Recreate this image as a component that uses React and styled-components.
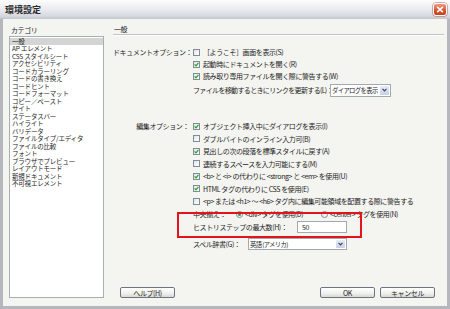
import React from 'react';
import styled, { createGlobalStyle } from 'styled-components';

const Global = createGlobalStyle`
  html, body { margin: 0; padding: 0; background: #f3f3f0; }
  body { font-family: "Noto Sans CJK JP", "Noto Sans", sans-serif; }
`;

const Window = styled.div`
  position: relative;
  width: 450px;
  height: 309px;
  display: flex;
  flex-direction: column;
  background: #f4f4f1;
  color: #1e1e1e;
  font-size: 7px;
  letter-spacing: -0.4px;
  overflow: hidden;
`;

const TitleBar = styled.div`
  height: 19px;
  flex: none;
  display: flex;
  align-items: center;
  justify-content: space-between;
  padding: 0 3px 0 5px;
  box-sizing: border-box;
  background: linear-gradient(#fdfdfd 0%, #ececf1 45%, #d7d7df 85%, #c4c4cd 100%);
`;

const Title = styled.div`
  font-size: 9px;
  font-weight: bold;
  letter-spacing: 0;
  color: #2a2a2a;
`;

const CloseButton = styled.div`
  width: 14px;
  height: 13px;
  box-sizing: border-box;
  border: 1px solid #fff;
  border-radius: 3px;
  background: linear-gradient(#ee9a80, #d4532f 60%, #c8401f);
  display: flex;
  align-items: center;
  justify-content: center;
  box-shadow: 0 0 0 0.5px #b06050;
`;

const Frame = styled.div`
  flex: 1;
  display: flex;
  box-sizing: border-box;
  padding: 6px 3px 8px 6px;
  border-left: 3px solid #b6b6be;
  border-right: 3px solid #b6b6be;
  border-bottom: 3px solid #b6b6be;
`;

const Sidebar = styled.div`
  width: 95px;
  flex: none;
  display: flex;
  flex-direction: column;
`;

const SideLabel = styled.div`
  height: 11px;
  line-height: 10px;
  padding-left: 2px;
`;

const List = styled.div`
  height: 262px;
  box-sizing: border-box;
  border: 1px solid #a9aeb5;
  background: #fff;
  padding-top: 0.5px;
`;

const ListItem = styled.div`
  height: 7.5px;
  line-height: 7.5px;
  font-size: 6.5px;
  letter-spacing: -0.2px;
  padding-left: 2px;
  white-space: nowrap;
  background: ${(p) => (p.$selected ? '#d4d4d4' : 'transparent')};
`;

const Main = styled.div`
  flex: 1;
  margin-left: 9px;
  display: flex;
  flex-direction: column;
`;

const Header = styled.div`
  height: 9px;
  line-height: 9px;
  padding-left: 1px;
`;

const Separator = styled.div`
  height: 0;
  border-top: 1px solid #c2c2c2;
  border-bottom: 1px solid #ffffff;
`;

const Section = styled.div`
  display: flex;
  margin-top: ${(p) => p.$top}px;
`;

const SectionLabel = styled.div`
  width: 80px;
  flex: none;
  box-sizing: border-box;
  text-align: right;
  padding-right: 4px;
  line-height: ${(p) => p.$h}px;
  white-space: nowrap;
`;

const Options = styled.div`
  display: flex;
  flex-direction: column;
`;

const Row = styled.div`
  height: ${(p) => p.$h}px;
  margin-top: ${(p) => p.$top || 0}px;
  display: flex;
  align-items: center;
  white-space: nowrap;
`;

const Box = styled.span`
  width: 7px;
  height: 7px;
  flex: none;
  box-sizing: border-box;
  border: 1px solid #7f8c9b;
  background: linear-gradient(135deg, #e4e4e0, #ffffff);
  margin-right: 3px;
  display: flex;
  align-items: center;
  justify-content: center;
`;

const Radio = styled.span`
  width: 7px;
  height: 7px;
  flex: none;
  box-sizing: border-box;
  border: 1px solid #7f8c9b;
  border-radius: 50%;
  background: linear-gradient(135deg, #e4e4e0, #ffffff);
  margin-right: 2px;
  display: flex;
  align-items: center;
  justify-content: center;
  &::after {
    content: '';
    display: ${(p) => (p.$checked ? 'block' : 'none')};
    width: 3px;
    height: 3px;
    border-radius: 50%;
    background: #2aa52a;
  }
`;

const Bottom = styled.div`
  padding-left: 80px;
  display: flex;
  flex-direction: column;
`;

const FixedLabel = styled.span`
  width: ${(p) => p.$w}px;
  flex: none;
  white-space: nowrap;
  letter-spacing: ${(p) => (p.$tight ? '-0.65px' : 'inherit')};
`;

const Select = styled.div`
  width: ${(p) => p.$w}px;
  height: ${(p) => p.$h}px;
  box-sizing: border-box;
  border: 1px solid #a3a9b1;
  background: #fff;
  display: flex;
  align-items: center;
`;

const SelectText = styled.span`
  flex: 1;
  min-width: 0;
  padding-left: 1px;
  font-size: 6.3px;
  letter-spacing: -0.6px;
  white-space: nowrap;
`;

const Arrow = styled.span`
  width: 9px;
  flex: none;
  align-self: stretch;
  margin: 1px;
  background: linear-gradient(#e6ecf8, #c6d0e6);
  border-radius: 1px;
  display: flex;
  align-items: center;
  justify-content: center;
`;

const Input = styled.div`
  width: 50px;
  height: 12px;
  box-sizing: border-box;
  border: 1px solid #a3a9b1;
  background: #fff;
  padding-left: 4px;
  line-height: 10px;
`;

const ButtonRow = styled.div`
  margin-top: auto;
  display: flex;
  align-items: center;
  padding: 0 9px 0 7px;
`;

const Button = styled.div`
  width: 55px;
  height: 11px;
  box-sizing: border-box;
  border: 1px solid #6a7685;
  border-radius: 2px;
  background: linear-gradient(#ffffff, #f0f0ec 60%, #d8d8d2);
  display: flex;
  align-items: center;
  justify-content: center;
  margin-left: ${(p) => p.$ml || 0}px;
`;

const Spacer = styled.div`
  flex: 1;
`;

const Highlight = styled.div`
  position: absolute;
  left: 177px;
  top: 212px;
  width: 185px;
  height: 26px;
  box-sizing: border-box;
  border: 2px solid #e3141b;
  pointer-events: none;
`;

const Check = ({ checked }) => (
  <Box>
    {checked && (
      <svg width="5" height="5" viewBox="0 0 5 5">
        <path d="M0.6 2.4 L2 3.8 L4.4 0.9" fill="none" stroke="#1f9e1f" strokeWidth="1.2" />
      </svg>
    )}
  </Box>
);

const Chevron = () => (
  <svg width="5" height="4" viewBox="0 0 5 4">
    <path d="M0.5 0.8 L2.5 2.8 L4.5 0.8" fill="none" stroke="#3b4350" strokeWidth="1.2" />
  </svg>
);

const categories = [
  '一般',
  'AP エレメント',
  'CSS スタイルシート',
  'アクセシビリティ',
  'コードカラーリング',
  'コードの書き換え',
  'コードヒント',
  'コードフォーマット',
  'コピー／ペースト',
  'サイト',
  'ステータスバー',
  'ハイライト',
  'バリデータ',
  'ファイルタイプ/エディタ',
  'ファイルの比較',
  'フォント',
  'ブラウザでプレビュー',
  'レイアウトモード',
  '新規ドキュメント',
  '不可視エレメント',
];

const docOptions = [
  { label: '［ようこそ］画面を表示(S)', checked: false },
  { label: '起動時にドキュメントを開く(R)', checked: true },
  { label: '読み取り専用ファイルを開く際に警告する(W)', checked: true },
];

const editOptions = [
  { label: 'オブジェクト挿入中にダイアログを表示(I)', checked: true },
  { label: 'ダブルバイトのインライン入力可(B)', checked: false },
  { label: '見出しの次の段落を標準スタイルに戻す(A)', checked: true },
  { label: '連続するスペースを入力可能にする(M)', checked: false },
  { label: '<b> と <i> の代わりに <strong> と <em> を使用(U)', checked: true },
  { label: 'HTML タグの代わりに CSS を使用(E)', checked: true },
  { label: '<p> または <h1> ～ <h6> タグ内に編集可能領域を配置する際に警告する', checked: false },
];

export default function App() {
  return (
    <>
      <Global />
      <Window>
        <TitleBar>
          <Title>環境設定</Title>
          <CloseButton>
            <svg width="8" height="7" viewBox="0 0 8 7">
              <path d="M1.2 0.8 L6.8 6.2 M6.8 0.8 L1.2 6.2" stroke="#fff" strokeWidth="1.6" />
            </svg>
          </CloseButton>
        </TitleBar>
        <Frame>
          <Sidebar>
            <SideLabel>カテゴリ</SideLabel>
            <List>
              {categories.map((c, i) => (
                <ListItem key={c} $selected={i === 0}>
                  {c}
                </ListItem>
              ))}
            </List>
          </Sidebar>
          <Main>
            <Header>一般</Header>
            <Separator />
            <Section $top={10}>
              <SectionLabel $h={12}>ドキュメントオプション：</SectionLabel>
              <Options>
                {docOptions.map((o) => (
                  <Row key={o.label} $h={12}>
                    <Check checked={o.checked} />
                    {o.label}
                  </Row>
                ))}
                <Row $h={14} $top={1}>
                  <FixedLabel $w={137} $tight>ファイルを移動するときにリンクを更新する(L)：</FixedLabel>
                  <Select $w={61} $h={13}>
                    <SelectText>ダイアログを表示</SelectText>
                    <Arrow>
                      <Chevron />
                    </Arrow>
                  </Select>
                </Row>
              </Options>
            </Section>
            <Section $top={23}>
              <SectionLabel $h={12.5}>編集オプション：</SectionLabel>
              <Options>
                {editOptions.map((o) => (
                  <Row key={o.label} $h={12.5}>
                    <Check checked={o.checked} />
                    {o.label}
                  </Row>
                ))}
              </Options>
            </Section>
            <Bottom>
              <Row $h={12} $top={0.5}>
                <FixedLabel $w={43}>中央揃え：</FixedLabel>
                <Radio $checked />
                <FixedLabel $w={76}>&lt;div&gt; タグを使用(D)</FixedLabel>
                <Radio />
                &lt;center&gt; タグを使用(N)
              </Row>
              <Row $h={12} $top={1}>
                <FixedLabel $w={104}>ヒストリステップの最大数(H)：</FixedLabel>
                <Input>50</Input>
              </Row>
              <Row $h={12} $top={5}>
                <FixedLabel $w={55}>スペル辞書(G)：</FixedLabel>
                <Select $w={99} $h={12}>
                  <SelectText>英語 (アメリカ)</SelectText>
                  <Arrow>
                    <Chevron />
                  </Arrow>
                </Select>
              </Row>
            </Bottom>
            <ButtonRow>
              <Button>ヘルプ(H)</Button>
              <Spacer />
              <Button>OK</Button>
              <Button $ml={5}>キャンセル</Button>
            </ButtonRow>
          </Main>
        </Frame>
        <Highlight />
      </Window>
    </>
  );
}
